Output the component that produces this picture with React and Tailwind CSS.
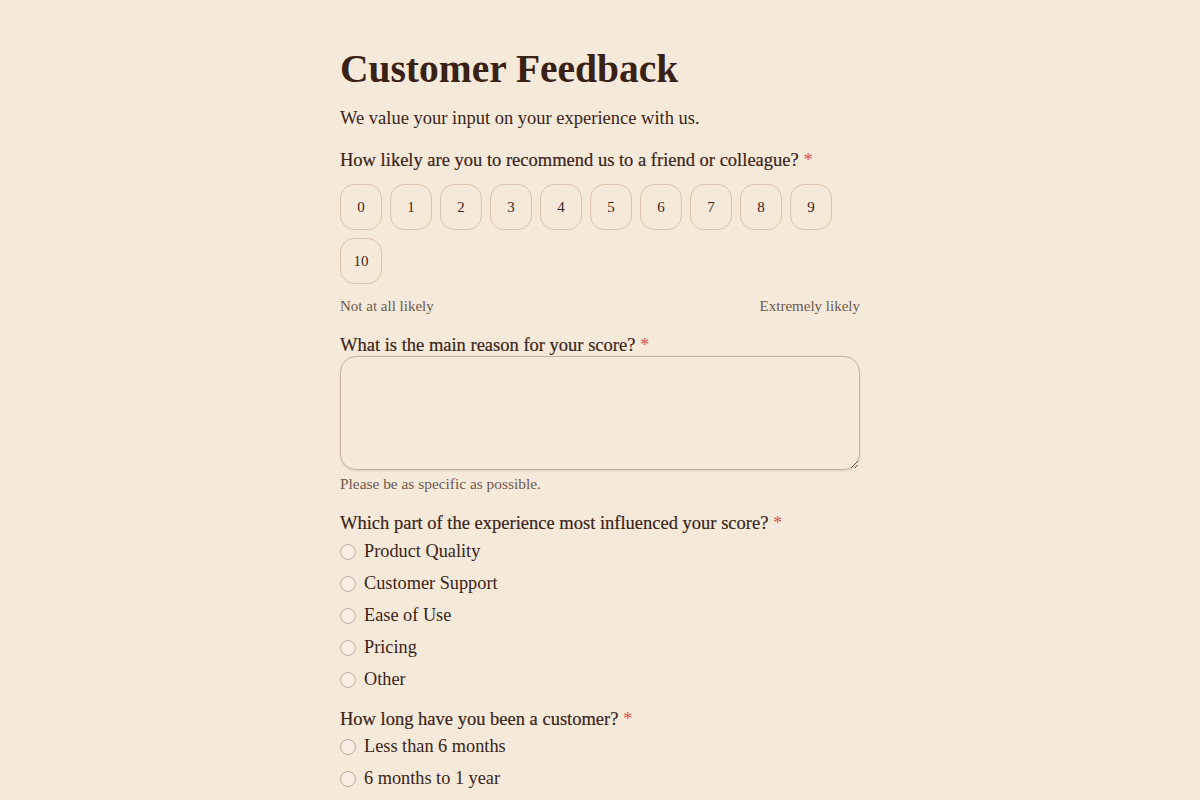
import React from "react";

const serif = { fontFamily: '"Liberation Serif", "DejaVu Serif", serif' };

function Label({ children }) {
  return (
    <div className="text-[18.5px] leading-[24px] text-[#3a2418] [-webkit-text-stroke:0.2px_#3a2418]">
      {children} <span className="text-[#d9534f] [-webkit-text-stroke:0]">*</span>
    </div>
  );
}

function Radio({ label }) {
  return (
    <label className="flex items-center gap-2 h-[24px] text-[18.3px] text-[#3a2418]">
      <span className="w-[16px] h-[16px] rounded-full border border-[#bfae9f] bg-[#f7ede2] shrink-0" />
      <span>{label}</span>
    </label>
  );
}

export default function App() {
  const nums = [0, 1, 2, 3, 4, 5, 6, 7, 8, 9, 10];
  return (
    <div className="min-h-screen bg-[#f5e9da]" style={serif}>
      <div className="w-[520px] mx-auto pt-[46px]">
        <h1 className="text-[39.5px] leading-[46px] font-bold text-[#3a2116]">Customer Feedback</h1>
        <p className="mt-[14px] text-[18.5px] leading-[24px] text-[#3a2418]">
          We value your input on your experience with us.
        </p>

        <div className="mt-[18px]">
          <Label>How likely are you to recommend us to a friend or colleague?</Label>
          <div className="mt-[12px] flex flex-wrap gap-[8px] w-[500px]">
            {nums.map((n) => (
              <button
                key={n}
                className="w-[42px] h-[46px] rounded-[14px] border border-[#dcc3ab] text-[15px] text-[#3a2418] flex items-center justify-center"
              >
                {n}
              </button>
            ))}
          </div>
          <div className="mt-[12px] flex justify-between text-[15px] leading-[20px] text-[#6e5a4d]">
            <span>Not at all likely</span>
            <span>Extremely likely</span>
          </div>
        </div>

        <div className="mt-[17px]">
          <Label>What is the main reason for your score?</Label>
          <textarea
            className="block -mt-[1px] w-[520px] h-[114px] rounded-[16px] border border-[#c7b09e] bg-transparent shadow-[0_1px_2px_rgba(80,50,30,0.15)] outline-none"
          />
          <div className="mt-[4px] text-[15.4px] leading-[20px] text-[#6e5a4d]">Please be as specific as possible.</div>
        </div>

        <div className="mt-[17px]">
          <Label>Which part of the experience most influenced your score?</Label>
          <div className="mt-[5px] flex flex-col gap-[8px]">
            <Radio label="Product Quality" />
            <Radio label="Customer Support" />
            <Radio label="Ease of Use" />
            <Radio label="Pricing" />
            <Radio label="Other" />
          </div>
        </div>

        <div className="mt-[15px] pb-[12px]">
          <Label>How long have you been a customer?</Label>
          <div className="mt-[4px] flex flex-col gap-[8px]">
            <Radio label="Less than 6 months" />
            <Radio label="6 months to 1 year" />
          </div>
        </div>
      </div>
    </div>
  );
}
